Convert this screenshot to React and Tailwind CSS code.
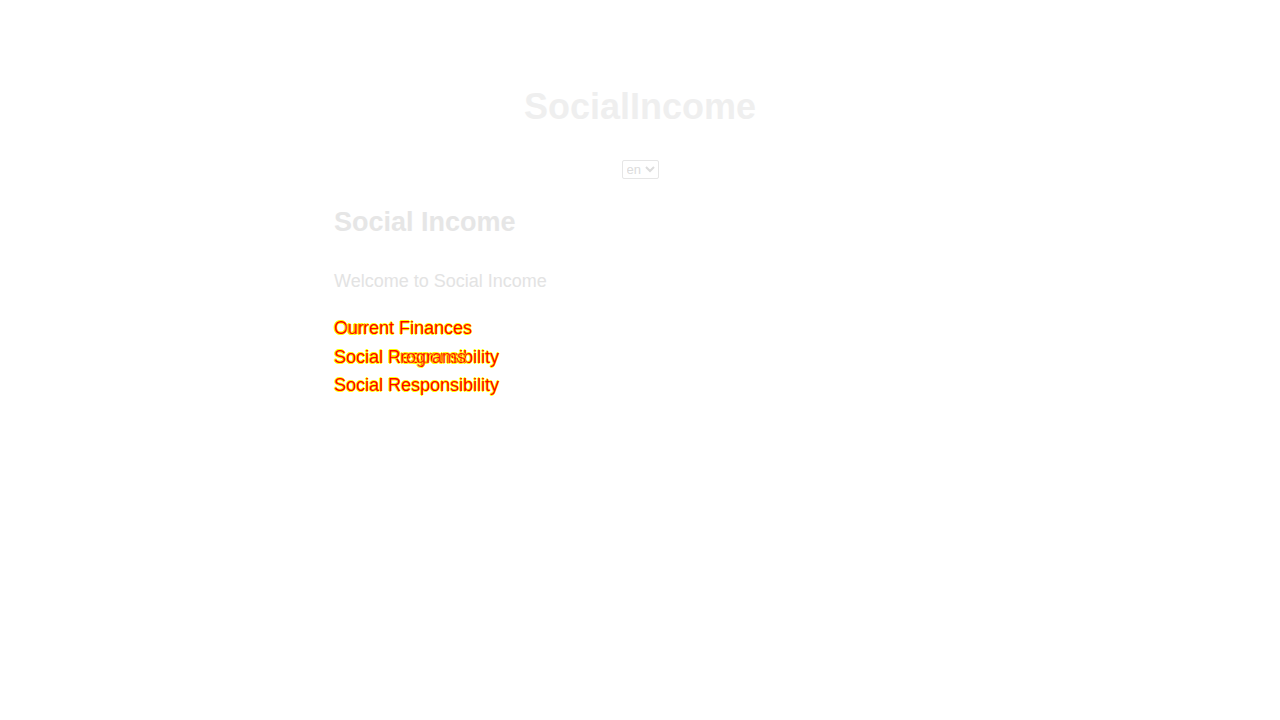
import React from 'react';

const links = [
  { label: 'Current Finances', ghost: 'Our' },
  { label: 'Social Responsibility', ghost: 'Social Programs' },
  { label: 'Social Responsibility', ghost: null },
];

const linkStyle =
  'text-[#ff0000] [text-shadow:-0.7px_0_#ffff00,0.7px_0_#ffff00,0_0.7px_#ffff00,0_-0.7px_#ffff00]';

const App = () => {
  return (
    <div className="min-h-[720px] bg-white font-['Liberation_Sans',Arial,sans-serif] text-[18px]">
      <header className="pt-[86px] flex flex-col items-center">
        <h1 className="text-[36px] font-bold leading-[41px] text-[#efefef]">SocialIncome</h1>
        <select
          defaultValue="en"
          className="mt-[33px] h-[19px] w-[37px] border border-[#e6e6e6] rounded-[2px] text-[13px] text-[#dcdcdc] bg-white"
        >
          <option value="en">en</option>
        </select>
      </header>
      <main className="w-[612px] mx-auto">
        <h2 className="mt-[28px] text-[27px] font-bold leading-[31px] text-[#e6e6e6]">Social Income</h2>
        <p className="mt-[33px] leading-[21px] text-[#e3e3e3]">Welcome to Social Income</p>
        <ul className="mt-[22px]">
          {links.map((l, i) => (
            <li key={i} className="relative leading-[28.5px]">
              <a href="#" className={linkStyle}>
                {l.label}
              </a>
              {l.ghost && (
                <span className={'absolute left-0 top-0 pointer-events-none opacity-80 ' + linkStyle}>{l.ghost}</span>
              )}
            </li>
          ))}
        </ul>
      </main>
    </div>
  );
};

export default App;
